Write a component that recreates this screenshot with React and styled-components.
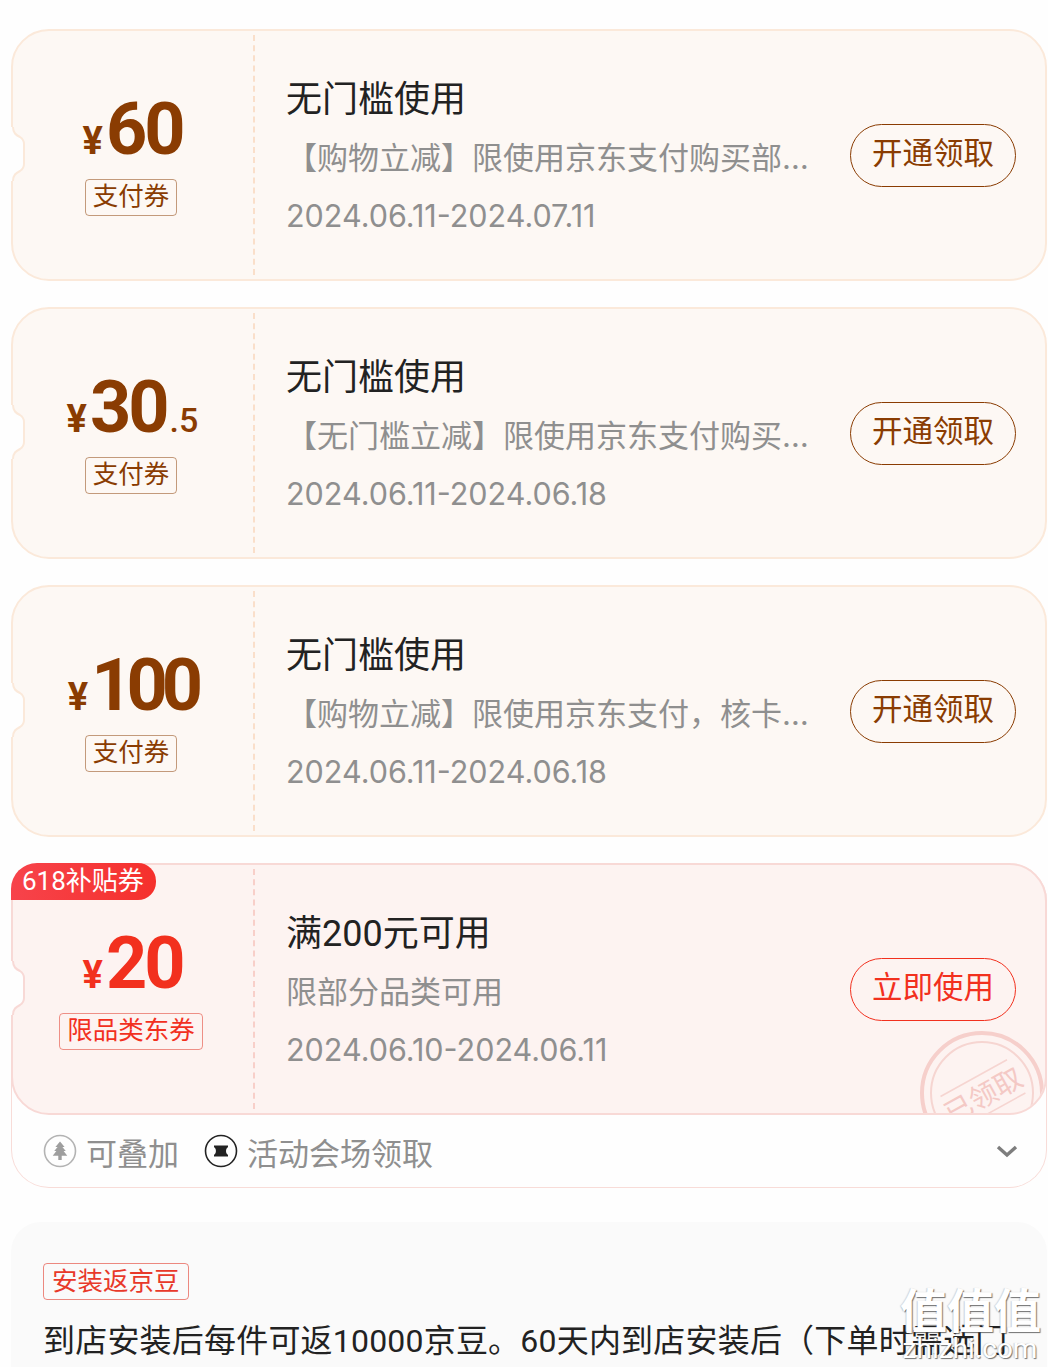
import React from 'react';
import styled, { createGlobalStyle } from 'styled-components';

const GlobalStyle = createGlobalStyle`
  html, body {
    margin: 0;
    padding: 0;
    height: 1367px;
    overflow: hidden;
    background: #fefefe;
    font-family: Roboto, "Noto Sans CJK SC", sans-serif;
  }
`;

const tones = {
  brown: {
    main: '#8a3c02',
    tag: 'rgba(138, 60, 2, 0.5)',
    bg: '#fdf8f4',
    line: '#fbe9da',
    dash: '#fadfca',
  },
  red: {
    main: '#f2301e',
    tag: 'rgba(226, 60, 45, 0.55)',
    bg: '#fdf3f1',
    line: '#f8d9d6',
    dash: '#f8cfc9',
  },
};

const Page = styled.div`
  position: relative;
  height: 1367px;
  overflow: hidden;
  padding: 29px 1px 0 11px;
  box-sizing: border-box;
  display: flex;
  flex-direction: column;
  gap: 26px;
`;

const TicketBox = styled.div`
  position: relative;
  height: 252px;
  box-sizing: border-box;
  flex-shrink: 0;
  display: flex;
  background: ${(p) => tones[p.$tone].bg};
  border: 2px solid ${(p) => tones[p.$tone].line};
  border-radius: 38px;
`;

const Notch = styled.svg`
  position: absolute;
  left: -2px;
  top: 96px;
  width: 15px;
  height: 54px;
`;

const Badge = styled.div`
  position: absolute;
  left: -2px;
  top: -2px;
  width: 145px;
  height: 37px;
  box-sizing: border-box;
  padding-left: 11px;
  font-size: 26px;
  line-height: 36px;
  color: #fff;
  white-space: nowrap;
  background: linear-gradient(90deg, #f7434b, #f5302c);
  border-radius: 26px 18px 18px 0;
`;

const Left = styled.div`
  width: 240px;
  flex-shrink: 0;
  display: flex;
  flex-direction: column;
  align-items: center;
  padding: 57px 4px 0 0;
  box-sizing: border-box;
  color: ${(p) => tones[p.$tone].main};
`;

const Amount = styled.div`
  display: flex;
  align-items: baseline;
  height: 84px;
  line-height: 84px;
  margin-left: 3px;
  font-weight: 700;
  white-space: nowrap;
`;

const Yen = styled.span`
  font-size: 38px;
  margin-right: 3px;
`;

const Big = styled.span`
  font-size: 72px;
  letter-spacing: ${(p) => (p.$tight ? '-6px' : '-3px')};
`;

const Small = styled.span`
  font-size: 34px;
  font-weight: 500;
  margin-left: 3px;
`;

const Tag = styled.div`
  margin-top: 7px;
  height: 37px;
  box-sizing: border-box;
  padding: 0 7px;
  font-size: 25.5px;
  line-height: 33px;
  white-space: nowrap;
  border: 1px solid ${(p) => tones[p.$tone].tag};
  border-radius: 4px;
`;

const Divider = styled.div`
  width: 0;
  margin: 4px 0;
  border-left: 2px dashed ${(p) => tones[p.$tone].dash};
`;

const Info = styled.div`
  width: 525px;
  margin-left: 31px;
  padding-top: 5px;
  display: flex;
  flex-direction: column;
  justify-content: center;
  min-width: 0;
  flex-shrink: 0;
`;

const Title = styled.div`
  font-size: 36px;
  line-height: 58px;
  color: #222;
  white-space: nowrap;
`;

const Desc = styled.div`
  font-family: Inter, "Noto Sans CJK SC", sans-serif;
  font-size: 31px;
  line-height: 58px;
  color: #8f8f8f;
  white-space: nowrap;
  overflow: hidden;
  text-overflow: ellipsis;
`;

const Dates = styled.div`
  font-family: Inter, sans-serif;
  font-size: 30.5px;
  line-height: 58px;
  color: #8f8f8f;
  white-space: nowrap;
`;

const Action = styled.div`
  position: relative;
  margin: auto 0 auto 39px;
  width: 166px;
  height: 63px;
  flex-shrink: 0;
  box-sizing: border-box;
  text-align: center;
  font-size: 30.5px;
  line-height: 57px;
  color: ${(p) => tones[p.$tone].main};
  border: 1.5px solid ${(p) => tones[p.$tone].main};
  border-radius: 32px;
`;

const StampClip = styled.div`
  position: absolute;
  inset: 0;
  overflow: hidden;
  border-radius: 36px;
  pointer-events: none;
`;

const Stamp = styled.svg`
  position: absolute;
  right: -2px;
  bottom: -45px;
  width: 130px;
  height: 130px;
`;

const Panel = styled.div`
  display: flex;
  flex-direction: column;
  height: 325px;
  flex-shrink: 0;
  box-sizing: border-box;
  border: 1px solid #f8dcd8;
  border-top: none;
  border-radius: 38px;
  background: #fefefe;

  ${TicketBox} {
    margin: 0 -1px;
  }
`;

const PanelFoot = styled.div`
  flex: 1;
  display: flex;
  align-items: center;
  padding: 0 28px 0 31px;
`;

const FootLabel = styled.span`
  font-size: 31px;
  color: #8f8f8f;
  margin-left: 9px;
  margin-right: ${(p) => (p.$last ? 'auto' : '25px')};
  white-space: nowrap;
`;

const Detail = styled.div`
  height: 200px;
  margin-top: 8px;
  flex-shrink: 0;
  box-sizing: border-box;
  padding: 41px 0 0 32px;
  background: #fafafa;
  border-radius: 30px 30px 0 0;
`;

const DetailTag = styled.div`
  display: inline-block;
  height: 37px;
  box-sizing: border-box;
  padding: 0 8px;
  font-size: 25.5px;
  line-height: 34px;
  color: #e8392a;
  border: 1px solid rgba(226, 60, 45, 0.6);
  border-radius: 4px;
`;

const DetailText = styled.div`
  margin-top: 13px;
  font-size: 32px;
  line-height: 56px;
  letter-spacing: 0.2px;
  color: #222;
  white-space: nowrap;
  overflow: hidden;
`;

const Watermark = styled.div`
  position: absolute;
  right: 8px;
  bottom: 6px;
  width: 140px;
  text-align: center;
  color: #fff;
  text-shadow: 1px 1px 1px rgba(70, 70, 70, 0.75), -1px 0 1px rgba(120, 120, 120, 0.3);
`;

const WatermarkMain = styled.div`
  font-size: 47px;
  font-weight: 700;
  line-height: 50px;
  white-space: nowrap;
`;

const WatermarkSub = styled.div`
  font-size: 28px;
  line-height: 24px;
  white-space: nowrap;
`;

const TreeIcon = () => (
  <svg width="34" height="34" viewBox="0 0 34 34" fill="none">
    <circle cx="17" cy="17" r="15.5" stroke="#b3b3b3" strokeWidth="1.6" />
    <path
      d="M17 7.5l4.6 5.4h-2.2l3.4 4.2h-2.2l3.7 4.6h-5.6v4.3h-3.4v-4.3H9.7l3.7-4.6h-2.2l3.4-4.2h-2.2z"
      fill="#9e9e9e"
    />
  </svg>
);

const TicketIcon = () => (
  <svg width="34" height="34" viewBox="0 0 34 34" fill="none">
    <circle cx="17" cy="17" r="15.5" stroke="#222" strokeWidth="1.6" />
    <path
      d="M10 11.5h14v1.8c-2.6.8-2.6 6.6 0 7.4v1.8H10v-1.8c2.6-.8 2.6-6.6 0-7.4z"
      fill="#222"
    />
  </svg>
);

const Chevron = () => (
  <svg width="22" height="14" viewBox="0 0 22 14" fill="none">
    <path d="M2 3l9 8 9-8" stroke="#7d7d7d" strokeWidth="3.4" />
  </svg>
);

const Ticket = ({ tone, badge, yen, big, small, tag, title, desc, dates, action, taken, tight }) => (
  <TicketBox $tone={tone}>
    <Notch viewBox="0 0 15 54">
      <path
        d="M0 0H2C2 6 5 8 9 10C12 12 13 14 13 17V37C13 40 12 42 9 44C5 46 2 48 2 54H0Z"
        fill="#fefefe"
      />
      <path
        d="M2 0C2 6 5 8 9 10C12 12 13 14 13 17V37C13 40 12 42 9 44C5 46 2 48 2 54"
        fill="none"
        stroke={tones[tone].line}
        strokeWidth="2"
      />
    </Notch>
    {badge && <Badge>{badge}</Badge>}
    <Left $tone={tone}>
      <Amount>
        <Yen>{yen}</Yen>
        <Big $tight={tight}>{big}</Big>
        {small && <Small>{small}</Small>}
      </Amount>
      <Tag $tone={tone}>{tag}</Tag>
    </Left>
    <Divider $tone={tone} />
    <Info>
      <Title>{title}</Title>
      <Desc>{desc}</Desc>
      <Dates>{dates}</Dates>
    </Info>
    <Action $tone={tone}>{action}</Action>
    {taken && (
      <StampClip>
        <Stamp viewBox="0 0 130 130" fill="none">
          <circle cx="65" cy="65" r="60" stroke="#f6cfcb" strokeWidth="4" />
          <circle cx="65" cy="65" r="51" stroke="#f6d5d1" strokeWidth="2" />
          <g transform="rotate(-29 65 65)">
            <path d="M27 48H103M27 86H103" stroke="#f6d5d1" strokeWidth="1.6" />
            <text x="65" y="78" textAnchor="middle" fontSize="28" fill="#f4c9c5">
              已领取
            </text>
          </g>
        </Stamp>
      </StampClip>
    )}
  </TicketBox>
);

const App = () => (
  <>
    <GlobalStyle />
    <Page>
      <Ticket
        tone="brown"
        yen="¥"
        big="60"
        tag="支付券"
        title="无门槛使用"
        desc="【购物立减】限使用京东支付购买部分商品可用"
        dates="2024.06.11-2024.07.11"
        action="开通领取"
      />
      <Ticket
        tone="brown"
        yen="¥"
        big="30"
        small=".5"
        tag="支付券"
        title="无门槛使用"
        desc="【无门槛立减】限使用京东支付购买部分商品"
        dates="2024.06.11-2024.06.18"
        action="开通领取"
      />
      <Ticket
        tone="brown"
        yen="¥"
        big="100"
        tight
        tag="支付券"
        title="无门槛使用"
        desc="【购物立减】限使用京东支付，核卡用户专享优惠"
        dates="2024.06.11-2024.06.18"
        action="开通领取"
      />
      <Panel>
        <Ticket
          tone="red"
          badge="618补贴券"
          yen="¥"
          big="20"
          tag="限品类东券"
          title="满200元可用"
          desc="限部分品类可用"
          dates="2024.06.10-2024.06.11"
          action="立即使用"
          taken
        />
        <PanelFoot>
          <TreeIcon />
          <FootLabel>可叠加</FootLabel>
          <TicketIcon />
          <FootLabel $last>活动会场领取</FootLabel>
          <Chevron />
        </PanelFoot>
      </Panel>
      <Detail>
        <DetailTag>安装返京豆</DetailTag>
        <DetailText>到店安装后每件可返10000京豆。60天内到店安装后（下单时需选门</DetailText>
      </Detail>
      <Watermark>
        <WatermarkMain>值值值</WatermarkMain>
        <WatermarkSub>zhizhi.com</WatermarkSub>
      </Watermark>
    </Page>
  </>
);

export default App;
